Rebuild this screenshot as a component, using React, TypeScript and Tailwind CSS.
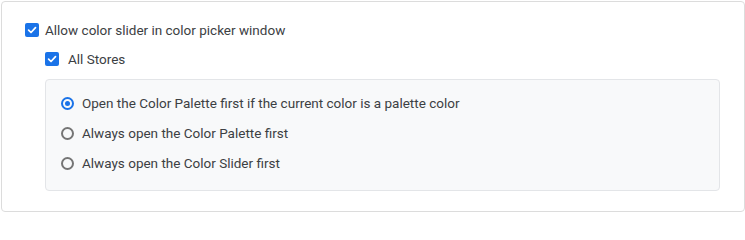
import { useState } from "react"

const options = [
  "Open the Color Palette first if the current color is a palette color",
  "Always open the Color Palette first",
  "Always open the Color Slider first",
]

function Checkbox({ checked, onChange }: { checked: boolean; onChange: () => void }) {
  return (
    <button
      onClick={onChange}
      className={`w-[14px] h-[14px] rounded-[2px] flex items-center justify-center shrink-0 ${
        checked ? "bg-[#1a73e8]" : "border-2 border-[#6b6b6b] bg-white"
      }`}
    >
      {checked && (
        <svg width="10" height="10" viewBox="0 0 10 10" fill="none">
          <path d="M1.6 5.2 L4 7.5 L8.5 2.6" stroke="white" strokeWidth="1.7" strokeLinecap="round" strokeLinejoin="round" />
        </svg>
      )}
    </button>
  )
}

function Radio({ checked }: { checked: boolean }) {
  return (
    <span
      className={`w-[13px] h-[13px] rounded-full border-2 flex items-center justify-center shrink-0 ${
        checked ? "border-[#1a73e8]" : "border-[#757575]"
      }`}
    >
      {checked && <span className="w-[5px] h-[5px] rounded-full bg-[#1a73e8]" />}
    </span>
  )
}

export default function App() {
  const [allow, setAllow] = useState(true)
  const [allStores, setAllStores] = useState(true)
  const [mode, setMode] = useState(0)

  return (
    <div className="w-[745px] h-[212px] bg-white pt-px pl-px font-['Roboto',sans-serif] text-[13.5px] text-[#3c4043]">
      <div className="h-full border border-[#dcdcdc] rounded-[4px] pl-[23px] pr-[24px] pt-[20px]">
        <label className="flex items-center gap-[6px] h-[16px]">
          <Checkbox checked={allow} onChange={() => setAllow(!allow)} />
          <span>Allow color slider in color picker window</span>
        </label>

        <div className="pl-[20px] mt-[13px]">
          <label className="flex items-center gap-[9px] h-[16px]">
            <Checkbox checked={allStores} onChange={() => setAllStores(!allStores)} />
            <span>All Stores</span>
          </label>

          <div className="mt-[12px] bg-[#f8f9fa] border border-[#e3e5e8] rounded-[4px] pl-[15px] pt-[15px] pb-[11px] h-[112px]">
            {options.map((o, i) => (
              <div
                key={o}
                onClick={() => setMode(i)}
                className="flex items-center gap-[8px] h-[16px] mb-[14px] cursor-pointer"
              >
                <Radio checked={mode === i} />
                <span>{o}</span>
              </div>
            ))}
          </div>
        </div>
      </div>
    </div>
  )
}
